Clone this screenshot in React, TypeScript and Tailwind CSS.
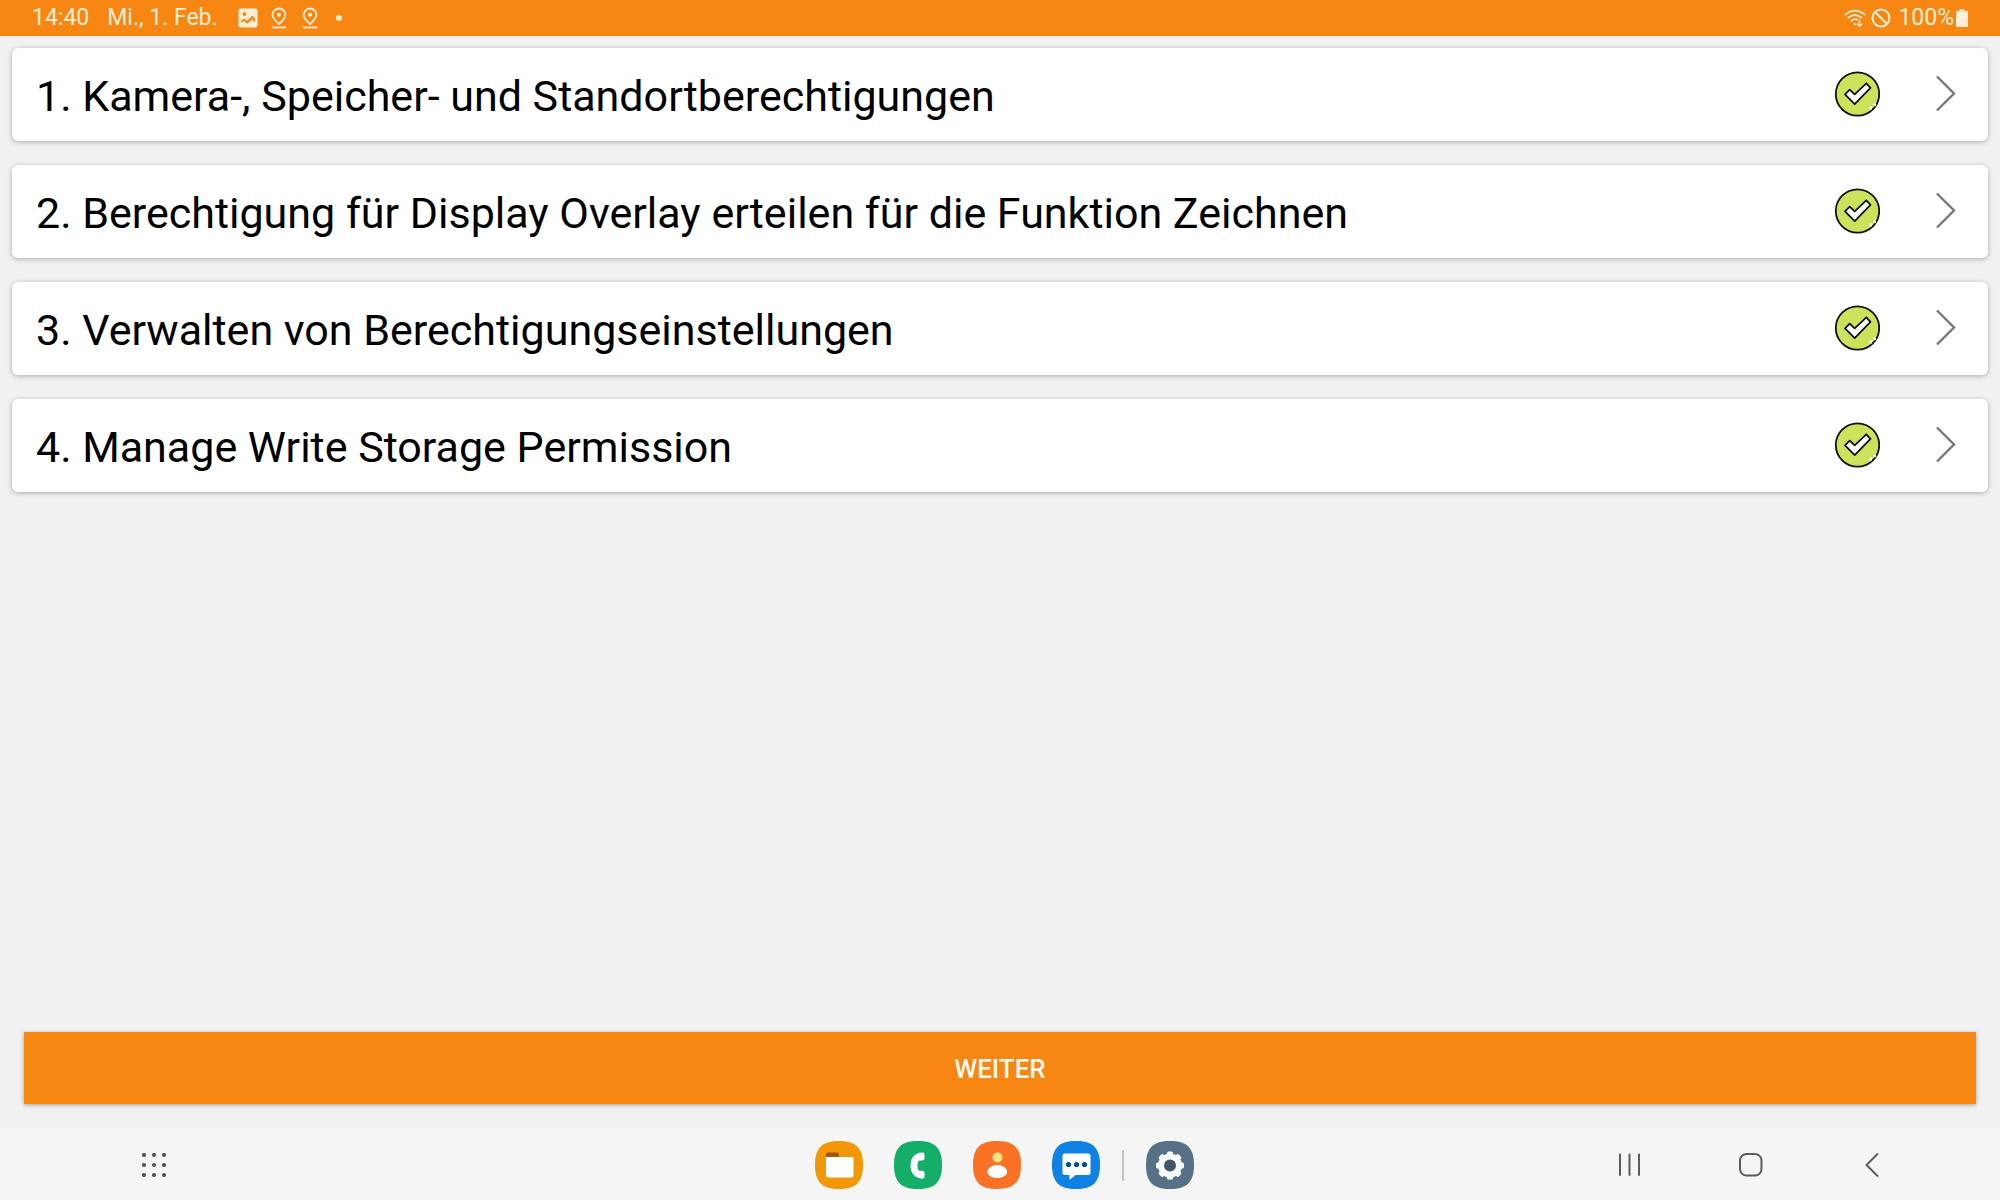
import type { ReactNode } from "react";

type Permission = {
  id: number;
  title: string;
};

const permissions: Permission[] = [
  { id: 1, title: "Kamera-, Speicher- und Standortberechtigungen" },
  { id: 2, title: "Berechtigung für Display Overlay erteilen für die Funktion Zeichnen" },
  { id: 3, title: "Verwalten von Berechtigungseinstellungen" },
  { id: 4, title: "Manage Write Storage Permission" },
];

export default function App() {
  return (
    <div className="flex min-h-screen flex-col bg-[#f1f1f1] font-['Roboto',sans-serif]">
      <StatusBar />
      <main className="flex flex-1 flex-col">
        <ul className="flex flex-col gap-6 px-3 pt-3">
          {permissions.map((item) => (
            <PermissionRow key={item.id} item={item} />
          ))}
        </ul>
        <div className="mt-auto p-6">
          <button
            type="button"
            className="h-[72px] w-full bg-[#f88613] pt-0.5 text-[26px] font-medium text-[#fffaf0] shadow-[0_1px_4px_rgba(0,0,0,0.35)]"
          >
            WEITER
          </button>
        </div>
      </main>
      <NavigationBar />
    </div>
  );
}

function StatusBar() {
  return (
    <header className="flex h-9 items-center justify-between bg-[#f88613] pl-8 pr-8 text-[23px] leading-9 text-[#ffeed8]">
      <div className="flex items-center">
        <span>14:40</span>
        <span className="ml-[18px]">Mi., 1. Feb.</span>
        <svg className="ml-5 h-5 w-5" viewBox="0 0 20 20" aria-hidden="true">
          <rect x="0.500" y="0.500" width="19" height="19" rx="2" fill="currentColor" />
          <circle cx="6.500" cy="6" r="1.900" fill="#f88613" />
          <path d="M3 14.500V13l3.200-2.600 3 2.400 5-5.200L17 10.400v4.100l-2.800-3.300-4.800 4.600-3.200-2.600z" fill="#f88613" />
        </svg>
        <PinIcon className="ml-[11px]" />
        <PinIcon className="ml-[11px]" />
        <span className="ml-4 h-1.5 w-1.5 rounded-full bg-[#ffeed8]" />
      </div>
      <div className="flex items-center">
        <svg className="h-5 w-[22px]" viewBox="0 0 22 20" fill="none" stroke="currentColor" strokeWidth="1.8" strokeLinecap="round" aria-hidden="true">
          <path d="M1.500 6.500C7 1.200 15 1.200 20.500 6.500" />
          <path d="M4.500 9.700C8.300 6.200 13.700 6.200 17.500 9.700" />
          <path d="M7.500 12.900C9.500 11 11.500 10.900 13 11.600" />
          <path d="M10.500 15.800l1 .8M15.500 12v6M13.300 16l2.200 2.200 2.200-2.200" strokeWidth="1.600" />
        </svg>
        <svg className="ml-[5px] h-5 w-5" viewBox="0 0 20 20" fill="none" stroke="currentColor" strokeWidth="2" aria-hidden="true">
          <circle cx="10" cy="10" r="8.500" />
          <path d="M4 4l12 12" />
        </svg>
        <span className="ml-[7px]">100%</span>
        <svg className="ml-0.5 h-[18px] w-3" viewBox="0 0 12 18" fill="currentColor" aria-hidden="true">
          <path d="M3.500 0h5v2H10.500a1.500 1.500 0 0 1 1.500 1.500v13a1.500 1.500 0 0 1-1.500 1.500h-9A1.500 1.500 0 0 1 0 16.500v-13A1.500 1.500 0 0 1 1.500 2h2z" />
        </svg>
      </div>
    </header>
  );
}

function PinIcon({ className }: { className: string }) {
  return (
    <svg className={`h-[22px] w-5 ${className}`} viewBox="0 0 20 22" fill="none" stroke="currentColor" strokeWidth="1.8" aria-hidden="true">
      <path d="M10 17.200C6.200 13.500 3.600 10.700 3.600 7.900a6.400 6.400 0 0 1 12.800 0c0 2.800-2.600 5.600-6.400 9.300z" />
      <circle cx="10" cy="7.800" r="2" fill="currentColor" stroke="none" />
      <path d="M3 20.500h14" />
    </svg>
  );
}

function PermissionRow({ item }: { item: Permission }) {
  return (
    <li>
      <button
        type="button"
        className="flex h-[93px] w-full items-center rounded-md bg-white pb-px pl-6 pr-8 text-left text-[43px] text-black shadow-[0_1px_5px_rgba(0,0,0,0.3)]"
      >
        <span className="flex-1 pt-1">
          {item.id}. {item.title}
        </span>
        <svg className="h-[46px] w-[46px]" viewBox="0 0 46 46" aria-hidden="true">
          <circle cx="23.500" cy="23" r="21.700" fill="#cbe35b" stroke="#111" strokeWidth="1.800" />
          <path d="M36 38l2-2M40 34.500l1.500-1.500" stroke="#fff" strokeWidth="3" />
          <circle cx="38.800" cy="38" r="1" fill="#111" />
          <path
            d="M11 23.400l4.700-4.700 5 4.700 11.600-11.100 4.200 4.600-15.800 16.200z"
            fill="#fff"
            stroke="#111"
            strokeWidth="1.800"
            strokeLinejoin="round"
          />
        </svg>
        <svg className="ml-14 h-[38px] w-5" viewBox="0 0 20 38" fill="none" stroke="#777" strokeWidth="2.400" aria-hidden="true">
          <path d="M1 1.500l17 17L1 35.500" />
        </svg>
      </button>
    </li>
  );
}

function DockButton({ label, color, children }: { label: string; color: string; children: ReactNode }) {
  return (
    <button type="button" aria-label={label} className="h-12 w-12">
      <svg className="h-12 w-12" viewBox="0 0 48 48" aria-hidden="true">
        <path d="M24 0C41 0 48 7 48 24S41 48 24 48 0 41 0 24 7 0 24 0z" fill={color} />
        {children}
      </svg>
    </button>
  );
}

function NavigationBar() {
  return (
    <nav className="grid h-[72px] grid-cols-[1fr_auto_1fr] items-center bg-[#f5f5f5] pt-0.5">
      <button type="button" aria-label="Apps" className="ml-[142px] h-6 w-6">
        <svg viewBox="0 0 24 24" fill="#555" aria-hidden="true">
          {[2, 12, 22].map((y) => [2, 12, 22].map((x) => <circle key={`${x}-${y}`} cx={x} cy={y} r="2.1" />))}
        </svg>
      </button>
      <div className="flex items-center pl-2">
        <div className="flex gap-[31px]">
          <DockButton label="Eigene Dateien" color="#f29706">
            <path d="M11 17v-3.500a2 2 0 0 1 2-2h9a2 2 0 0 1 2 2V17z" fill="#a5540f" />
            <path d="M11 16h26a1.500 1.500 0 0 1 1.500 1.500V34a2.500 2.500 0 0 1-2.500 2.500H13.500A2.500 2.500 0 0 1 11 34z" fill="#fff" />
          </DockButton>
          <DockButton label="Telefon" color="#13ae67">
            <path
              d="M28 11.500c-6.500.3-11.500 4.500-11.500 13s5 12.700 11.500 13.200c1.600.1 2.500-.8 2.500-2.200v-3.600c0-1.600-1-2.200-2.400-2.200h-2.300c-1.500 0-2.300-1.800-2.300-5s.8-5.200 2.300-5.200h2.300c1.400 0 2.400-.6 2.400-2.200v-3.600c0-1.400-.9-2.300-2.500-2.200z"
              fill="#fff"
            />
          </DockButton>
          <DockButton label="Kontakte" color="#f97124">
            <circle cx="24.500" cy="16.500" r="5" fill="#ffe680" />
            <path d="M14.500 31c0-4 4.500-7 9.800-7s9.800 3 9.800 7c0 3.500-4.600 6-9.800 6s-9.800-2.500-9.800-6z" fill="#fff" />
          </DockButton>
          <DockButton label="Nachrichten" color="#0f80e4">
            <path d="M13 12.500h23a2.500 2.500 0 0 1 2.500 2.500v16.500a2.500 2.500 0 0 1-2.500 2.500H23.500L17.500 39v-5H13a2.500 2.500 0 0 1-2.500-2.500V15a2.500 2.500 0 0 1 2.500-2.500z" fill="#fff" />
            <g fill="#064f91">
              <circle cx="16.500" cy="23.500" r="2.600" />
              <circle cx="24.500" cy="23.500" r="2.600" />
              <circle cx="32.500" cy="23.500" r="2.600" />
            </g>
          </DockButton>
        </div>
        <span className="mx-[22px] h-[31px] w-0.5 bg-[#c4c4c4]" />
        <DockButton label="Einstellungen" color="#567185">
          <g fill="#f6fcff">
            <circle cx="24" cy="24.500" r="12" />
            {[0, 45, 90, 135].map((angle) => (
              <rect key={angle} x="21" y="10.500" width="6" height="28" rx="1.500" transform={`rotate(${angle} 24 24.500)`} />
            ))}
          </g>
          <circle cx="24" cy="24.500" r="6" fill="#435766" />
        </DockButton>
      </div>
      <div className="flex items-center justify-end gap-[97px] pr-[116px] text-[#5c5c5c]">
        <button type="button" aria-label="Letzte Apps" className="h-6 w-6">
          <svg viewBox="0 0 24 24" fill="none" stroke="currentColor" strokeWidth="2" strokeLinecap="round" aria-hidden="true">
            <path d="M2 1.500v20.500M11.500 1.500v20.500M21 1.500v20.500" />
          </svg>
        </button>
        <button type="button" aria-label="Startbildschirm" className="h-6 w-6">
          <svg viewBox="0 0 24 24" fill="none" stroke="currentColor" strokeWidth="2" aria-hidden="true">
            <rect x="1" y="1" width="21.500" height="21.500" rx="6.500" />
          </svg>
        </button>
        <button type="button" aria-label="Zurück" className="h-6 w-6">
          <svg viewBox="0 0 24 24" fill="none" stroke="currentColor" strokeWidth="2" aria-hidden="true">
            <path d="M18 0.500L6.500 12l11.500 11.500" />
          </svg>
        </button>
      </div>
    </nav>
  );
}
